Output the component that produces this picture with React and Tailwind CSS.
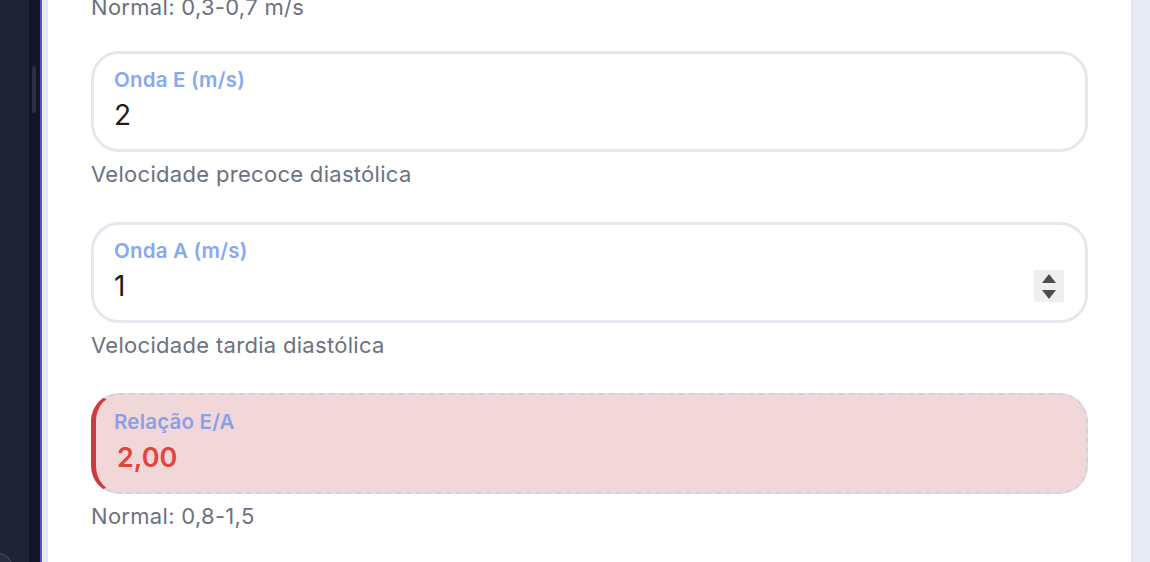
// App.jsx - Doppler mitral (Onda E / Onda A / Relação E/A)
const font = { fontFamily: 'Inter, "Noto Sans", sans-serif' };

function Spinner() {
  return (
    <div className="flex h-[32px] w-[30px] flex-col items-center justify-center gap-[7px] bg-[#efefef]">
      <svg width="14" height="9" viewBox="0 0 14 9"><path d="M7 0 L14 9 L0 9 Z" fill="#4d4d4d" /></svg>
      <svg width="14" height="9" viewBox="0 0 14 9"><path d="M0 0 L14 0 L7 9 Z" fill="#4d4d4d" /></svg>
    </div>
  );
}

function Field({ label, value, helper, spinner }) {
  return (
    <div className="mt-[36px]">
      <div className="h-[101px] rounded-[28px] border-[3px] border-[#e3e8ef] bg-white pl-[20px] pr-[21px] pt-[14px]">
        <div className="text-[20.5px] font-semibold leading-[24px] tracking-[0.2px] text-[#87a9f2]">{label}</div>
        <div className="mt-[7px] flex items-start justify-between">
          <span className="text-[28px] leading-[32px] text-[#1c1c1c]">{value}</span>
          {spinner && <Spinner />}
        </div>
      </div>
      <p className="mt-[10px] text-[22px] leading-[24px] tracking-[0.3px] text-[#6b7280]">{helper}</p>
    </div>
  );
}

export default function App() {
  return (
    <div className="relative flex h-[562px] w-full overflow-hidden bg-[#1f2335]" style={font}>
      {/* barra lateral escura */}
      <div className="w-[29px] bg-[#1f2335]" />
      <div className="w-[11px] bg-[#111726] pt-[66px]">
        <div className="ml-[3px] h-[47px] w-[4px] rounded-full bg-[#2b3142]" />
      </div>
      <div className="w-[2px] bg-[#5a4dc6]" />
      <div className="w-[1px] bg-[#f4f5f8]" />
      <div className="w-[5px] bg-[#e3e7ee]" />

      <main className="flex-1 bg-white px-[43px]">
        <p className="-mt-[5px] text-[22px] leading-[24px] tracking-[0.3px] text-[#6b7280]">Normal: 0,3-0,7 m/s</p>
        <div className="-mt-[4px]">
          <Field label="Onda E (m/s)" value="2" helper="Velocidade precoce diastólica" />
        </div>
        <Field label="Onda A (m/s)" value="1" helper="Velocidade tardia diastólica" spinner />

        <div className="mt-[36px]">
          <div className="h-[101px] rounded-[28px] border-2 border-dashed border-[#cfd4dc] border-l-[5px] border-l-[#cf3a40] bg-[#f2d7d9] pl-[18px] pt-[15px] [border-left-style:solid]">
            <div className="text-[20.5px] font-semibold leading-[24px] tracking-[0.2px] text-[#8a9fe8]">Relação E/A</div>
            <div className="ml-[3px] mt-[8px] text-[27px] font-semibold leading-[32px] text-[#e0443f]">2,00</div>
          </div>
          <p className="mt-[10px] text-[22px] leading-[24px] tracking-[0.3px] text-[#6b7280]">Normal: 0,8-1,5</p>
        </div>
      </main>

      <div className="w-[2px] bg-[#dfe3ea]" />
      <div className="w-[17px] bg-[#e6eaf3]" />

      <div className="absolute left-[-14px] top-[553px] h-[26px] w-[26px] rounded-full border border-[#4a5064] bg-[#2a2f40]" />
    </div>
  );
}
